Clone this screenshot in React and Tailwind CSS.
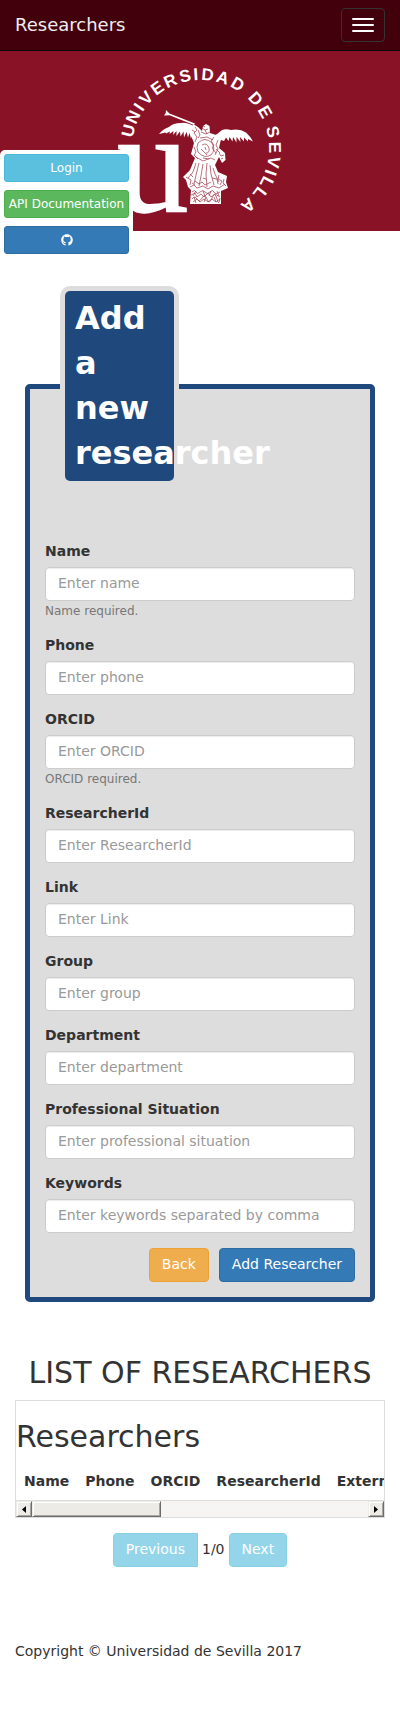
import React from "react";
import { FaGithub } from "react-icons/fa";

const SEAL_LETTERS = [
  ["U", -76], ["N", -65], ["I", -56], ["V", -47], ["E", -35.5], ["R", -24],
  ["S", -12], ["I", -3.6], ["D", 5.5], ["A", 17.5], ["D", 30],
  ["D", 48], ["E", 60.5],
  ["S", 77], ["E", 89], ["V", 100.5], ["I", 109], ["L", 117], ["L", 127], ["A", 140],
];

const FIELDS = [
  { id: "name", label: "Name", placeholder: "Enter name", help: "Name required." },
  { id: "phone", label: "Phone", placeholder: "Enter phone" },
  { id: "orcid", label: "ORCID", placeholder: "Enter ORCID", help: "ORCID required." },
  { id: "researcherId", label: "ResearcherId", placeholder: "Enter ResearcherId" },
  { id: "link", label: "Link", placeholder: "Enter Link" },
  { id: "group", label: "Group", placeholder: "Enter group" },
  { id: "department", label: "Department", placeholder: "Enter department" },
  { id: "situation", label: "Professional Situation", placeholder: "Enter professional situation" },
  { id: "keywords", label: "Keywords", placeholder: "Enter keywords separated by comma" },
];

const COLUMNS = ["Name", "Phone", "ORCID", "ResearcherId", "External"];

function Logo() {
  return (
    <svg viewBox="110 51 180 180" className="h-[180px] w-[180px]" role="img" aria-label="Universidad de Sevilla">
      <g fill="#fff" fontFamily="Liberation Sans, sans-serif" fontWeight="700" fontSize="17" textAnchor="middle">
        {SEAL_LETTERS.map(([letter, angle], i) => (
          <text key={i} x="200.5" y="80" transform={`rotate(${angle} 200.5 148.5)`}>{letter}</text>
        ))}
      </g>
      <text x="117" y="212" fill="#fff" stroke="#fff" strokeWidth="1.5" fontFamily="Liberation Serif, serif" fontSize="143">u</text>
      <g fill="#fff">
        <path d="M166 110 L169.5 113.5 L195 123.5 L194 125 L169.5 115.3 L164 115.5 Q166.5 113 166 110 Z" />
        <path d="M159 134 Q163 129 169 127 Q173 123 181 123 Q187 122 195 127 L193 133 L191 138.5 L189.5 133 L188 137.5 L186.5 132 L184 137.5 L183.5 131.5 L180.5 136.5 L180 131.5 L176.5 136 L176.5 131 L173 135 L173.5 131 L169.5 134 L170 131.5 L166 133.5 L165.5 132.5 Z" />
        <path d="M213 136 Q218 134 222 130 Q226 128.5 231 130 Q240 128.5 246 132.5 Q250 136 253 141.5 L248 139 L248 141.5 L244 137.5 L244 141.5 L240 137 L240.5 142 L236.5 137 L236.5 142.5 L233 137 L232.5 141.5 L229.5 137 L228.5 141 L226 137.5 L224 141 L221 140 L218 142 Z" />
        <path d="M203 126 L206 124 L209.5 126 L210 133 L216 135 L221 139 L219 148 L225 153 L225.5 160 L222 163 L219 157 L215 165 L218 172 L227 176 L226 182 L228 188 L221 191 L221 204 L190 204 L191 190 L188 187 L186 180 L183 177 L190 170 L195 158 L191 154 L194 143 L190 133 L193 124 L198 127 L202 131 Z" />
      </g>
      <g fill="none" stroke="#8a1226" strokeWidth=".7" opacity=".85">
        <path d="M202 128l3 2l3-1M201 132l5 2l4-2M203 126l2 1M205 130l2 4M195 127l2 3l-3 3l3 4l-2 5M192 130l3 2M198 130l2 5l-2 3M198 143q7-7 14 0q4 7-1 12q-7 4-13-3q-2-5 0-9M202 145q5-3 7 3q1 5-3 5M201 149l6 6M200 138l7-1l6 3M214 137l-3 4l3 4l-2 3l4 5M196 157l7 4l8-3l4 2M218 140l-2 5l2 4l-3 6M219 153l2 3l3-1M221 159l2-1M194 147l2 5l-2 3l4 4M216 149l4 4M203 158l6 1M205 147l1 3" />
        <path d="M196 163l-3 9l-5 6M199 163l-3 12l-2 9M203 164l-2 12l-2 10M207 163l-1 11l1 13M210 165l1 9l3 11M213 168l2 6l4 8M186 177l5 3l-1 5M219 175l-1 4l4 2l-2 4M190 187l4-2l3 3l6-2l5 3l5-3l6 2l6-4M195 181l4 3l3-2l3 3l6-3M190 174l3 3M212 178l5 1l1 5M224 179l-1 4l3 3M203 178l3 1M192 183l3 2" />
        <path d="M192 192q3-3 4 0t4 0t5 0t5 0t4 0t6 0M191 195l4-2l2 4l4-3l3 3l4-4l3 4l4-3l5 3M192 199q3-4 5 0t5-1t5 1t5-1t5 1t3-1M193 202l4-3l3 3l4-3l4 3l4-3l4 3l4-3M196 191l-3 5M203 191l2 5M211 191l-2 5M217 191l2 5M194 197l2 6M206 197l-2 5M214 197l2 5" />
      </g>
    </svg>
  );
}

function Field({ id, label, placeholder, help }) {
  return (
    <div className="mb-[15px]">
      <label htmlFor={id} className="mb-[6px] block leading-[19px] font-bold">{label}</label>
      <input
        id={id}
        type="text"
        placeholder={placeholder}
        className="block h-[34px] w-full rounded border border-[#ccc] bg-white px-3 pt-[5px] pb-[7px] text-[14px] text-[#555] shadow-[inset_0_1px_1px_rgba(0,0,0,0.075)] placeholder:text-[#999]"
      />
      {help && <small className="block text-[12px] leading-[20px] text-[#777]">{help}</small>}
    </div>
  );
}

const sideButton = "flex h-7 items-center justify-center rounded-[3px] border text-[12px] leading-[18px] text-white";
const formButton = "h-[34px] border px-3 pb-[2px] text-white";
const scrollButton =
  "flex h-4 w-4 items-center justify-center border border-t-[#edebe6] border-l-[#edebe6] border-r-[#6e6c69] border-b-[#6e6c69] bg-[#edebe6] shadow-[inset_1px_1px_0_#fff,inset_-1px_-1px_0_#a8a6a2]";

export default function App() {
  return (
    <div className="relative bg-white pb-[61px] font-['DejaVu_Sans',sans-serif] text-[14px] leading-[20px] text-[#333]">
      <nav className="flex h-[51px] items-center justify-between border-b border-[#080808] bg-[#42000d] px-[15px]">
        <a href="#" className="text-[18px] text-[#eee]">Researchers</a>
        <button type="button" aria-label="Toggle navigation" className="flex h-[34px] w-11 flex-col items-center justify-center gap-1 rounded border border-[#333]">
          <span className="h-[2px] w-[22px] rounded-[1px] bg-white" />
          <span className="h-[2px] w-[22px] rounded-[1px] bg-white" />
          <span className="h-[2px] w-[22px] rounded-[1px] bg-white" />
        </button>
      </nav>

      <header className="flex justify-center bg-[#8a1226]">
        <Logo />
      </header>

      <aside className="absolute top-[150px] left-0 flex w-[133px] flex-col gap-2 rounded-tl-[5px] bg-white p-1">
        <button type="button" className={`${sideButton} border-[#46b8da] bg-[#5bc0de]`}>Login</button>
        <a href="#" className={`${sideButton} border-[#4cae4c] bg-[#5cb85c] whitespace-nowrap`}>API Documentation</a>
        <a href="#" aria-label="GitHub" className={`${sideButton} border-[#2e6da4] bg-[#337ab7]`}><FaGithub size={12} /></a>
      </aside>

      <main className="px-[15px]">
        <form className="mx-[10px] pt-[55px]" onSubmit={(e) => e.preventDefault()}>
          <fieldset className="rounded-[5px] border-[5px] border-[#1f497d] bg-[#ddd] px-[15px] pb-[15px]">
            <legend className="ml-[15px] w-[119px] rounded-[10px] border-[5px] border-[#ddd] bg-[#ddd] text-[32px] leading-[45px] font-bold text-white">
              <span className="block rounded-[5px] bg-[#1f497d] px-[10px] py-[5px]">Add a new researcher</span>
            </legend>
            <div className="pt-14">
              {FIELDS.map((f) => <Field key={f.id} {...f} />)}
            </div>
            <div className="flex justify-end gap-[10px]">
              <button type="button" className={`${formButton} rounded border-[#eea236] bg-[#f0ad4e]`}>Back</button>
              <button type="submit" className={`${formButton} rounded border-[#2e6da4] bg-[#337ab7]`}>Add Researcher</button>
            </div>
          </fieldset>
        </form>

        <section className="mt-[54px]">
          <h2 className="mb-[11px] text-center text-[30px] leading-[33px] whitespace-nowrap">LIST OF RESEARCHERS</h2>
          <div className="border border-[#ddd]">
            <div className="overflow-hidden border-b border-[#ddd] pt-[19px]">
              <h2 className="mb-[10px] text-[30px] leading-[33px]">Researchers</h2>
              <table className="text-left whitespace-nowrap">
                <thead>
                  <tr>
                    {COLUMNS.map((c) => <th key={c} scope="col" className="px-2 pt-2 pb-[9px] font-bold">{c}</th>)}
                  </tr>
                </thead>
              </table>
            </div>
            <div className="flex h-4 bg-[#f6f5f3]">
              <button type="button" aria-label="Scroll left" className={scrollButton}>
                <svg viewBox="0 0 4 7" className="h-[7px] w-1"><path d="M4 0v7L0 3.5z" /></svg>
              </button>
              <div className="h-4 w-[35%] border border-t-[#edebe6] border-l-[#edebe6] border-r-[#6e6c69] border-b-[#6e6c69] bg-[#edebe6] shadow-[inset_1px_1px_0_#fff,inset_-1px_-1px_0_#a8a6a2]" />
              <div className="flex-1" />
              <button type="button" aria-label="Scroll right" className={scrollButton}>
                <svg viewBox="0 0 4 7" className="h-[7px] w-1"><path d="M0 0v7l4-3.5z" /></svg>
              </button>
            </div>
          </div>
          <div className="mt-[15px] flex items-center justify-center gap-1">
            <button type="button" disabled className={`${formButton} rounded-l border-[#46b8da] bg-[#5bc0de] opacity-65`}>Previous</button>
            <span className="pb-[2px]">1/0</span>
            <button type="button" disabled className={`${formButton} rounded border-[#46b8da] bg-[#5bc0de] opacity-65`}>Next</button>
          </div>
        </section>

        <footer className="mt-[74px]">Copyright © Universidad de Sevilla 2017</footer>
      </main>
    </div>
  );
}
